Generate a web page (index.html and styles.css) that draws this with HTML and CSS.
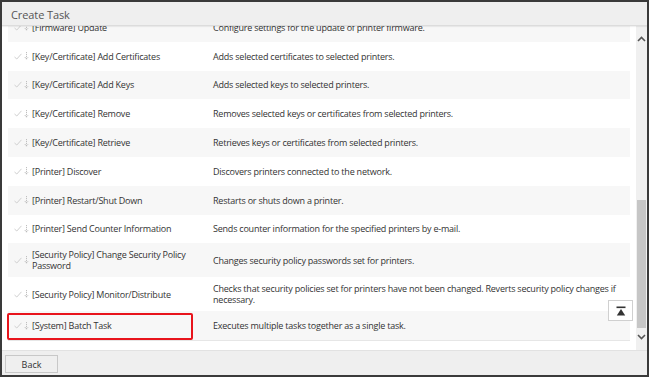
FILE: index.html
```html
<!DOCTYPE html>
<html lang="en">
<head>
  <meta charset="UTF-8" />
  <title>Create Task</title>
  <link rel="stylesheet" href="styles.css">
</head>
<body>
  <div class="dialog">
    <div class="title">Create Task</div>

    <div class="body">
      <div class="list">
        <div class="rows">
          <div class="row">
            <div class="name"><span class="icons"><svg width="8" height="7" viewBox="0 0 8 7"><path d="M0.5 4 L2.8 6 L7.5 0.8" fill="none" stroke="#cfcfcf" stroke-width="1"/></svg><svg width="5" height="8" viewBox="0 0 5 8"><path d="M2.5 0 V7 M0.8 5 L2.5 7.2 L4.2 5" fill="none" stroke="#b8b8b8" stroke-width="0.9" stroke-dasharray="1.2 0.8"/></svg></span>[Firmware] Update</div>
            <div class="desc">Configure settings for the update of printer firmware.</div>
          </div>
          <div class="row">
            <div class="name"><span class="icons"><svg width="8" height="7" viewBox="0 0 8 7"><path d="M0.5 4 L2.8 6 L7.5 0.8" fill="none" stroke="#cfcfcf" stroke-width="1"/></svg><svg width="5" height="8" viewBox="0 0 5 8"><path d="M2.5 0 V7 M0.8 5 L2.5 7.2 L4.2 5" fill="none" stroke="#b8b8b8" stroke-width="0.9" stroke-dasharray="1.2 0.8"/></svg></span>[Key/Certificate] Add Certificates</div>
            <div class="desc">Adds selected certificates to selected printers.</div>
          </div>
          <div class="row">
            <div class="name"><span class="icons"><svg width="8" height="7" viewBox="0 0 8 7"><path d="M0.5 4 L2.8 6 L7.5 0.8" fill="none" stroke="#cfcfcf" stroke-width="1"/></svg><svg width="5" height="8" viewBox="0 0 5 8"><path d="M2.5 0 V7 M0.8 5 L2.5 7.2 L4.2 5" fill="none" stroke="#b8b8b8" stroke-width="0.9" stroke-dasharray="1.2 0.8"/></svg></span>[Key/Certificate] Add Keys</div>
            <div class="desc">Adds selected keys to selected printers.</div>
          </div>
          <div class="row">
            <div class="name"><span class="icons"><svg width="8" height="7" viewBox="0 0 8 7"><path d="M0.5 4 L2.8 6 L7.5 0.8" fill="none" stroke="#cfcfcf" stroke-width="1"/></svg><svg width="5" height="8" viewBox="0 0 5 8"><path d="M2.5 0 V7 M0.8 5 L2.5 7.2 L4.2 5" fill="none" stroke="#b8b8b8" stroke-width="0.9" stroke-dasharray="1.2 0.8"/></svg></span>[Key/Certificate] Remove</div>
            <div class="desc">Removes selected keys or certificates from selected printers.</div>
          </div>
          <div class="row">
            <div class="name"><span class="icons"><svg width="8" height="7" viewBox="0 0 8 7"><path d="M0.5 4 L2.8 6 L7.5 0.8" fill="none" stroke="#cfcfcf" stroke-width="1"/></svg><svg width="5" height="8" viewBox="0 0 5 8"><path d="M2.5 0 V7 M0.8 5 L2.5 7.2 L4.2 5" fill="none" stroke="#b8b8b8" stroke-width="0.9" stroke-dasharray="1.2 0.8"/></svg></span>[Key/Certificate] Retrieve</div>
            <div class="desc">Retrieves keys or certificates from selected printers.</div>
          </div>
          <div class="row">
            <div class="name"><span class="icons"><svg width="8" height="7" viewBox="0 0 8 7"><path d="M0.5 4 L2.8 6 L7.5 0.8" fill="none" stroke="#cfcfcf" stroke-width="1"/></svg><svg width="5" height="8" viewBox="0 0 5 8"><path d="M2.5 0 V7 M0.8 5 L2.5 7.2 L4.2 5" fill="none" stroke="#b8b8b8" stroke-width="0.9" stroke-dasharray="1.2 0.8"/></svg></span>[Printer] Discover</div>
            <div class="desc">Discovers printers connected to the network.</div>
          </div>
          <div class="row">
            <div class="name"><span class="icons"><svg width="8" height="7" viewBox="0 0 8 7"><path d="M0.5 4 L2.8 6 L7.5 0.8" fill="none" stroke="#cfcfcf" stroke-width="1"/></svg><svg width="5" height="8" viewBox="0 0 5 8"><path d="M2.5 0 V7 M0.8 5 L2.5 7.2 L4.2 5" fill="none" stroke="#b8b8b8" stroke-width="0.9" stroke-dasharray="1.2 0.8"/></svg></span>[Printer] Restart/Shut Down</div>
            <div class="desc">Restarts or shuts down a printer.</div>
          </div>
          <div class="row">
            <div class="name"><span class="icons"><svg width="8" height="7" viewBox="0 0 8 7"><path d="M0.5 4 L2.8 6 L7.5 0.8" fill="none" stroke="#cfcfcf" stroke-width="1"/></svg><svg width="5" height="8" viewBox="0 0 5 8"><path d="M2.5 0 V7 M0.8 5 L2.5 7.2 L4.2 5" fill="none" stroke="#b8b8b8" stroke-width="0.9" stroke-dasharray="1.2 0.8"/></svg></span>[Printer] Send Counter Information</div>
            <div class="desc">Sends counter information for the specified printers by e-mail.</div>
          </div>
          <div class="row">
            <div class="name"><span class="icons"><svg width="8" height="7" viewBox="0 0 8 7"><path d="M0.5 4 L2.8 6 L7.5 0.8" fill="none" stroke="#cfcfcf" stroke-width="1"/></svg><svg width="5" height="8" viewBox="0 0 5 8"><path d="M2.5 0 V7 M0.8 5 L2.5 7.2 L4.2 5" fill="none" stroke="#b8b8b8" stroke-width="0.9" stroke-dasharray="1.2 0.8"/></svg></span><span>[Security Policy] Change Security Policy Password</span></div>
            <div class="desc">Changes security policy passwords set for printers.</div>
          </div>
          <div class="row">
            <div class="name"><span class="icons"><svg width="8" height="7" viewBox="0 0 8 7"><path d="M0.5 4 L2.8 6 L7.5 0.8" fill="none" stroke="#cfcfcf" stroke-width="1"/></svg><svg width="5" height="8" viewBox="0 0 5 8"><path d="M2.5 0 V7 M0.8 5 L2.5 7.2 L4.2 5" fill="none" stroke="#b8b8b8" stroke-width="0.9" stroke-dasharray="1.2 0.8"/></svg></span>[Security Policy] Monitor/Distribute</div>
            <div class="desc">Checks that security policies set for printers have not been changed. Reverts security policy changes if necessary.</div>
          </div>
          <div class="row last">
            <div class="name marked"><span class="icons"><svg width="8" height="7" viewBox="0 0 8 7"><path d="M0.5 4 L2.8 6 L7.5 0.8" fill="none" stroke="#cfcfcf" stroke-width="1"/></svg><svg width="5" height="8" viewBox="0 0 5 8"><path d="M2.5 0 V7 M0.8 5 L2.5 7.2 L4.2 5" fill="none" stroke="#b8b8b8" stroke-width="0.9" stroke-dasharray="1.2 0.8"/></svg></span>[System] Batch Task</div>
            <div class="desc">Executes multiple tasks together as a single task.</div>
          </div>
        </div>

        <button class="to-top"><svg width="10" height="10" viewBox="0 0 10 10"><rect x="0.5" y="0.5" width="9" height="1.6" fill="#333"/><path d="M5 3 L9.2 9.5 H0.8 Z" fill="#333"/></svg></button>
      </div>

      <div class="scrollbar">
        <svg class="arrow" width="9" height="6" viewBox="0 0 9 6"><path d="M1 5 L4.5 1.5 L8 5" fill="none" stroke="#555" stroke-width="1.6"/></svg>
        <div class="track"><div class="thumb"></div></div>
        <svg class="arrow" width="9" height="6" viewBox="0 0 9 6"><path d="M1 1 L4.5 4.5 L8 1" fill="none" stroke="#555" stroke-width="1.6"/></svg>
      </div>
    </div>

    <div class="footer">
      <button class="btn">Back</button>
    </div>
  </div>
</body>
</html>
```

FILE: styles.css
```css
body {
  margin: 0;
  font-family: 'Open Sans', 'Noto Sans', sans-serif;
  color: #333;
  background: #fff;
}
.dialog {
  width: 649px;
  height: 377px;
  box-sizing: border-box;
  border: 2px solid #3a3a3a;
  display: flex;
  flex-direction: column;
  overflow: hidden;
}
.title {
  height: 24px;
  flex: none;
  box-sizing: border-box;
  padding: 5px 9px 0;
  background: #efefef;
  border-bottom: 1px solid #dcdcdc;
  font-size: 11px;
  letter-spacing: -0.1px;
  color: #555;
  position: relative;
  z-index: 2;
  box-shadow: 0 1px 1px rgba(0, 0, 0, 0.06);
}
.body {
  flex: none;
  height: 324px;
  display: flex;
  background: #fff;
}
.list {
  flex: 1;
  position: relative;
  overflow: hidden;
  padding: 0 6px;
}
.rows {
  margin-top: -13px;
  border-bottom: 1px solid #e6e6e6;
}
.row {
  display: grid;
  grid-template-columns: 205px 1fr;
  align-items: center;
  min-height: 28.8px;
  box-sizing: border-box;
  padding: 6px 0;
  font-size: 9px;
  letter-spacing: -0.22px;
  line-height: 11px;
}
.row:nth-child(odd) {
  background: #f7f7f7;
}
.row.last {
  min-height: 29px;
}
.name {
  display: flex;
  align-items: center;
  padding: 0 12px 0 6px;
  position: relative;
}
.marked::after {
  content: '';
  position: absolute;
  left: -1px;
  right: 20px;
  top: -7px;
  bottom: -9px;
  border: 2px solid #e8141c;
  border-radius: 2px;
}
.icons {
  display: flex;
  align-items: center;
  gap: 2px;
  width: 18px;
  flex: none;
}
.desc {
  padding-right: 12px;
}
.to-top {
  position: absolute;
  right: 3px;
  bottom: 29px;
  width: 25px;
  height: 21px;
  padding: 0;
  background: #fff;
  border: 1px solid #d0d0d0;
  display: flex;
  align-items: center;
  justify-content: center;
}
.scrollbar {
  width: 11px;
  flex: none;
  background: #f0f0f0;
  display: flex;
  flex-direction: column;
  align-items: center;
  padding: 10px 0 10px;
  box-sizing: border-box;
}
.arrow {
  flex: none;
}
.track {
  flex: 1;
  width: 100%;
  display: flex;
  flex-direction: column;
  justify-content: flex-end;
  padding: 4px 1px 6px;
  box-sizing: border-box;
}
.thumb {
  height: 128px;
  background: #c6c6c6;
}
.footer {
  flex: 1;
  display: flex;
  align-items: flex-start;
  background: #efefef;
  border-top: 1px solid #e2e2e2;
  padding: 4px 3px;
}
.btn {
  width: 53px;
  height: 18px;
  padding: 0;
  font-family: inherit;
  font-size: 9px;
  color: #333;
  background: #efefef;
  border: 1px solid #c8c8c8;
}
```
